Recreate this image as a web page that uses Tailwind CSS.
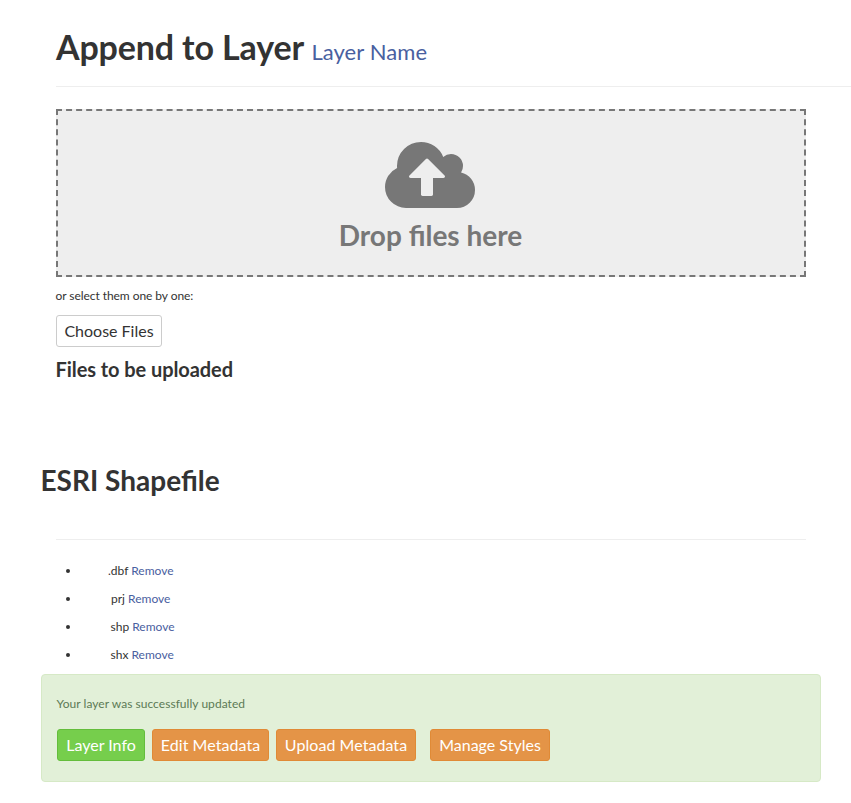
<!DOCTYPE html>
<html lang="en">
<head>
<meta charset="utf-8">
<title>Append to Layer</title>
<script src="https://cdn.jsdelivr.net/npm/@tailwindcss/browser@4"></script>
</head>
<body class="bg-white font-['Lato',sans-serif] text-[12px] leading-[18px] text-[#333] h-[803px] overflow-hidden">
<header class="ml-[56px] h-[87px] pt-[28px] border-b border-[#eee]">
  <h1 class="text-[34px] leading-[38px] font-bold whitespace-nowrap tracking-[-0.14px]">Append to Layer <small class="text-[22px] leading-none font-normal tracking-[0.08px] text-[#4960a0]">Layer Name</small></h1>
</header>
<main class="mx-[56px] w-[750px]">
  <section class="mt-[22px] h-[168px] bg-[#eee] border-2 border-dashed border-[#777] text-[#777] flex flex-col items-center pt-[31px]">
    <svg class="w-[90px] h-[66px] mr-[2px]" viewBox="0 128 1920 1408" fill="currentColor"><path d="M1280 864q0-14-9-23l-352-352q-9-9-23-9t-23 9l-351 351q-10 12-10 24 0 14 9 23t23 9h224v352q0 13 9.5 22.5t22.5 9.5h192q13 0 22.5-9.5t9.5-22.5v-352h224q13 0 22.5-9.5t9.5-22.5zm640 288q0 159-112.5 271.5t-271.5 112.5h-1088q-185 0-316.5-131.5t-131.5-316.5q0-130 70-240t188-165q-2-30-2-43 0-212 150-362t362-150q156 0 285.5 87t188.5 231q71-62 166-62 106 0 181 75t75 181q0 76-41 138 130 31 213.5 135.5t83.5 238.5z"/></svg>
    <h2 class="mt-[10px] mr-px text-[28px] leading-[34px] font-bold">Drop files here</h2>
  </section>
  <p class="mt-[10px] -ml-[0.5px] tracking-[-0.06px]">or select them one by one:</p>
  <button class="mt-[10px] block w-[106px] h-[32px] rounded-[3px] border border-[#ccc] bg-white text-[16px] leading-[30px]">Choose Files</button>
  <h4 class="-ml-[0.5px] mt-[10px] text-[20px] leading-[24px] font-bold tracking-[-0.07px]">Files to be uploaded</h4>
  <h3 class="-ml-[15.5px] mt-[82px] text-[28px] leading-[34px] font-bold">ESRI Shapefile</h3>
  <hr class="mt-[42px] border-[#eee]">
  <ul class="mt-[17px] pl-[10px] leading-[28px]">
    <li class="flex items-center"><span class="w-[4px] h-[4px] rounded-full bg-[#333] mr-[38px]"></span><span class="whitespace-pre">.dbf <a class="text-[#4960a0]">Remove</a></span></li>
    <li class="flex items-center"><span class="w-[4px] h-[4px] rounded-full bg-[#333] mr-[41px]"></span><span class="whitespace-pre">prj <a class="text-[#4960a0]">Remove</a></span></li>
    <li class="flex items-center"><span class="w-[4px] h-[4px] rounded-full bg-[#333] mr-[40.5px]"></span><span class="whitespace-pre">shp <a class="text-[#4960a0]">Remove</a></span></li>
    <li class="flex items-center"><span class="w-[4px] h-[4px] rounded-full bg-[#333] mr-[40.5px]"></span><span class="whitespace-pre">shx <a class="text-[#4960a0]">Remove</a></span></li>
  </ul>
</main>
<section class="ml-[41px] mt-[5px] w-[780px] h-[108px] rounded-[4px] border border-[#d6e9c6] bg-[#e2f0d8] pl-[15px] pt-[20px]">
  <p class="-ml-[0.5px] tracking-[0.04px] text-[#5c7a55]">Your layer was successfully updated</p>
  <div class="mt-[16px] flex text-[16px] leading-[30px] text-white text-center">
    <a class="w-[88px] h-[32px] rounded-[3px] border border-[#64bd3c] bg-[#76ce4c]">Layer Info</a>
    <a class="ml-[7px] w-[117px] h-[32px] rounded-[3px] border border-[#e08a36] bg-[#e49447] tracking-[0.05px]">Edit Metadata</a>
    <a class="ml-[7px] w-[140px] h-[32px] rounded-[3px] border border-[#e08a36] bg-[#e49447] tracking-[0.05px]">Upload Metadata</a>
    <a class="ml-[14px] w-[120px] h-[32px] rounded-[3px] border border-[#e08a36] bg-[#e49447]">Manage Styles</a>
  </div>
</section>
</body>
</html>
